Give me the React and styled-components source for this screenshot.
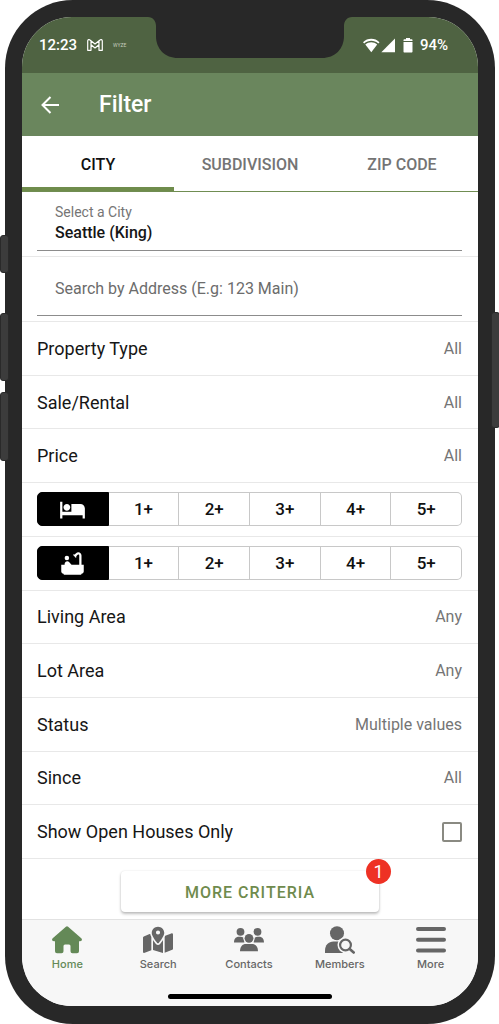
import React, { useState } from 'react';
import styled, { createGlobalStyle } from 'styled-components';
import { MdBathtub, MdHotel } from 'react-icons/md';
import { FaMapLocationDot } from 'react-icons/fa6';

const tabs = ['CITY', 'SUBDIVISION', 'ZIP CODE'];
const counts = ['1+', '2+', '3+', '4+', '5+'];

const topCriteria = [
  { label: 'Property Type', value: 'All' },
  { label: 'Sale/Rental', value: 'All' },
  { label: 'Price', value: 'All' },
];

const bottomCriteria = [
  { label: 'Living Area', value: 'Any' },
  { label: 'Lot Area', value: 'Any' },
  { label: 'Status', value: 'Multiple values' },
  { label: 'Since', value: 'All' },
];

const HomeIcon = () => (
  <svg width="30" height="28" viewBox="0 0 30 28" fill="currentColor">
    <path d="M13.9.8a1.700 1.700 0 0 1 2.200 0l13.200 11.400c1.300 1.200.5 3-1.200 3H27v10a2 2 0 0 1-2 2h-4.500a2 2 0 0 1-2-2V20a1.500 1.500 0 0 0-1.500-1.500h-4a1.500 1.500 0 0 0-1.500 1.500v5.200a2 2 0 0 1-2 2H5a2 2 0 0 1-2-2v-10H1.900c-1.700 0-2.500-1.800-1.200-3z" />
  </svg>
);

const ContactsIcon = () => (
  <svg width="30" height="28" viewBox="0 0 30 28" fill="currentColor">
    <circle cx="6.500" cy="5.800" r="3.900" />
    <circle cx="23.500" cy="5.800" r="3.900" />
    <path d="M0 16.500c0-3.600 1.800-5.700 5-5.700 2.200 0 4 .4 5.300 1.500v4.200zM30 16.500c0-3.600-1.800-5.700-5-5.700-2.200 0-4 .4-5.300 1.500v4.200z" />
    <circle cx="15" cy="12.300" r="5.700" fill="#f7f7f7" />
    <circle cx="15" cy="12.300" r="4.400" />
    <path d="M6 25.300c0-4.600 2.300-7.300 6-7.300h6c3.700 0 6 2.700 6 7.300z" />
  </svg>
);

const MembersIcon = () => (
  <svg width="30" height="28" viewBox="0 0 30 28">
    <circle cx="12" cy="7.200" r="7" fill="currentColor" />
    <path d="M0 27v-2.500c0-5.200 3.500-9 8.500-9H18v11.500z" fill="currentColor" />
    <circle cx="20.500" cy="19" r="8" fill="#f7f7f7" />
    <circle cx="20.500" cy="19" r="5.400" fill="none" stroke="currentColor" strokeWidth="2.200" />
    <path d="M24.700 23l4 3.500" stroke="currentColor" strokeWidth="2.600" strokeLinecap="round" />
  </svg>
);

const MoreIcon = () => (
  <svg width="30" height="28" viewBox="0 0 30 28" stroke="currentColor" strokeWidth="4" strokeLinecap="round">
    <path d="M2 3h26M2 13.700h26M2 24.400h26" />
  </svg>
);

const navItems = [
  { label: 'Home', icon: <HomeIcon />, active: true },
  { label: 'Search', icon: <FaMapLocationDot size={30} /> },
  { label: 'Contacts', icon: <ContactsIcon /> },
  { label: 'Members', icon: <MembersIcon /> },
  { label: 'More', icon: <MoreIcon /> },
];

const CountPicker = ({ name, icon }) => {
  const [selected, setSelected] = useState('any');

  return (
    <PickerRow>
      <Segments role="group" aria-label={name}>
        <Segment
          $active={selected === 'any'}
          aria-label={`Any ${name}`}
          aria-pressed={selected === 'any'}
          onClick={() => setSelected('any')}
        >
          {icon}
        </Segment>
        {counts.map(count => (
          <Segment
            key={count}
            $active={selected === count}
            aria-pressed={selected === count}
            onClick={() => setSelected(count)}
          >
            {count}
          </Segment>
        ))}
      </Segments>
    </PickerRow>
  );
};

const Criterion = ({ label, value }) => (
  <CriterionRow>
    <span>{label}</span>
    <Value>{value}</Value>
  </CriterionRow>
);

export default function App() {
  const [tab, setTab] = useState('CITY');
  const [openHouses, setOpenHouses] = useState(false);

  return (
    <Page>
      <GlobalStyle />
      <Phone>
        <SideKey $side="left" $top={235} $height={38} />
        <SideKey $side="left" $top={313} $height={68} />
        <SideKey $side="left" $top={392} $height={69} />
        <SideKey $side="right" $top={312} $height={116} />
        <Screen>
          <StatusBar>
            <Notch width="204" height="41" viewBox="0 0 204 41">
              <path d="M0 0c5 0 8 4 8 9v10c0 13 9 22 22 22h144c13 0 22-9 22-22V9c0-5 3-9 8-9z" fill="#282828" />
            </Notch>
            <StatusGroup>
              <span>12:23</span>
              <svg width="16" height="12" viewBox="0 0 16 12" fill="none" stroke="#fff" strokeWidth="1.200" strokeLinejoin="round">
                <path d="M.700 11.300V2C.700.500 2.200.300 3 1l5 4 5-4c.800-.700 2.300-.500 2.300 1v9.300h-3.300V5.800L8 9 4 5.800v5.500zM4 5.800V2M12 5.800V2" />
              </svg>
              <Tiny>WYZE</Tiny>
            </StatusGroup>
            <StatusIcons>
              <svg width="33" height="15" viewBox="0 0 33 15" fill="#fff">
                <path d="M0 4.200C4.500-.4 12-.4 16.500 4.200L15.300 5.600C11.300 1.800 5.200 1.800 1.200 5.600z" />
                <path d="M2.300 6.600c3.500-3 8.400-3 11.900 0l-5.900 7.600z" />
                <path d="M32 .500v13.700H18.300z" />
              </svg>
              <svg width="10" height="15" viewBox="0 0 10 15" fill="#fff">
                <path d="M3 0h4v1.300h1.500c.6 0 1 .4 1 1V3H.500v-.700c0-.600.400-1 1-1H3zM.500 4h9v9.500c0 .600-.400 1-1 1h-7c-.600 0-1-.400-1-1z" />
              </svg>
              <span>94%</span>
            </StatusIcons>
          </StatusBar>

          <Header>
            <BackButton aria-label="Back">
              <svg width="18" height="18" viewBox="0 0 18 18" fill="none" stroke="#fff" strokeWidth="2">
                <path d="M18 9H2M9.500 1L1.500 9l8 8" />
              </svg>
            </BackButton>
            <Title>Filter</Title>
          </Header>

          <Tabs role="tablist">
            {tabs.map(name => (
              <Tab key={name} role="tab" aria-selected={tab === name} $active={tab === name} onClick={() => setTab(name)}>
                {name}
              </Tab>
            ))}
          </Tabs>

          <Filters>
            <FieldRow>
              <Field>
                <FieldLabel htmlFor="city">Select a City</FieldLabel>
                <CitySelect id="city">
                  <option>Seattle (King)</option>
                </CitySelect>
              </Field>
            </FieldRow>
            <FieldRow>
              <Field>
                <AddressInput aria-label="Search by Address" placeholder="Search by Address (E.g: 123 Main)" />
              </Field>
            </FieldRow>
            {topCriteria.map(item => <Criterion key={item.label} {...item} />)}
            <CountPicker name="beds" icon={<MdHotel size={27} />} />
            <CountPicker name="baths" icon={<MdBathtub size={27} />} />
            {bottomCriteria.map(item => <Criterion key={item.label} {...item} />)}
            <CheckRow>
              <span>Show Open Houses Only</span>
              <Checkbox type="checkbox" checked={openHouses} onChange={e => setOpenHouses(e.target.checked)} />
            </CheckRow>
          </Filters>

          <Actions>
            <MoreButton>
              MORE CRITERIA
              <Badge>1</Badge>
            </MoreButton>
          </Actions>

          <BottomBar>
            <Nav>
              {navItems.map(item => (
                <NavLink key={item.label} href="#" $active={item.active}>
                  {item.icon}
                  <span>{item.label}</span>
                </NavLink>
              ))}
            </Nav>
            <HomeIndicator />
          </BottomBar>
        </Screen>
      </Phone>
    </Page>
  );
}

const GlobalStyle = createGlobalStyle`
  * {
    box-sizing: border-box;
  }
  body {
    margin: 0;
    background: #fff;
    font-family: Roboto, "Liberation Sans", sans-serif;
    color: #161616;
  }
  button, input, select {
    margin: 0;
    padding: 0;
    border: 0;
    background: none;
    font: inherit;
    color: inherit;
  }
  button {
    cursor: pointer;
  }
  svg {
    display: block;
    flex-shrink: 0;
  }
`;

const Page = styled.main`
  display: flex;
  min-height: 100vh;
  padding: 0 4px 0 5px;
`;

const Phone = styled.div`
  position: relative;
  flex: 1;
  display: flex;
  padding: 17px 17px 18px;
  border-radius: 68px;
  background: #282828;
`;

const SideKey = styled.i`
  position: absolute;
  ${props => props.$side}: -5px;
  top: ${props => props.$top}px;
  width: 9px;
  height: ${props => props.$height}px;
  border: 1px solid #2a2a2a;
  border-radius: 3px;
  background: #3c3c3c;
`;

const Screen = styled.div`
  flex: 1;
  min-width: 0;
  display: flex;
  flex-direction: column;
  overflow: hidden;
  border-radius: 50px;
  background: #fff;
`;

const StatusBar = styled.div`
  position: relative;
  display: flex;
  justify-content: space-between;
  height: 56px;
  padding: 0 30px 0 17px;
  background: #4f6342;
  color: #fff;
  font-size: 15px;
  font-weight: 500;
`;

const Notch = styled.svg`
  position: absolute;
  top: 0;
  left: 50%;
  transform: translateX(-50%);
`;

const StatusGroup = styled.div`
  display: flex;
  align-items: center;
  gap: 10px;
`;

const StatusIcons = styled(StatusGroup)`
  gap: 7px;
`;

const Tiny = styled.span`
  font-size: 5px;
  font-weight: 400;
  color: #c4ccbe;
`;

const Header = styled.header`
  display: flex;
  align-items: center;
  gap: 40px;
  height: 63px;
  padding: 0 19px;
  background: #6a865d;
  color: #fff;
`;

const BackButton = styled.button`
  display: flex;
`;

const Title = styled.h1`
  margin: 0;
  font-size: 23px;
  font-weight: 500;
`;

const Tabs = styled.div`
  display: grid;
  grid-template-columns: repeat(3, 1fr);
  height: 56px;
  border-bottom: 1px solid #708d52;
`;

const Tab = styled.button`
  padding-top: 6px;
  border-bottom: 4px solid ${props => (props.$active ? '#6f8c4c' : 'transparent')};
  font-size: 16px;
  font-weight: 500;
  color: ${props => (props.$active ? '#111' : '#747474')};
`;

const Filters = styled.div`
  flex: 1;
  display: flex;
  flex-direction: column;
`;

const FieldRow = styled.div`
  padding: 0 16px 5px 15px;
  border-bottom: 1px solid #e8e8e8;
`;

const Field = styled.div`
  display: flex;
  flex-direction: column;
  justify-content: center;
  height: 59px;
  padding: 4px 18px 0;
  border-bottom: 1px solid #8c8c8c;
`;

const FieldLabel = styled.label`
  font-size: 14px;
  line-height: 18px;
  color: #757575;
`;

const CitySelect = styled.select`
  appearance: none;
  height: 22px;
  font-size: 16px;
  font-weight: 500;
`;

const AddressInput = styled.input`
  width: 100%;
  font-size: 16px;
  outline: none;

  &::placeholder {
    color: #6c6c6c;
    opacity: 1;
  }
`;

const PickerRow = styled.div`
  flex: 1 0 48px;
  display: flex;
  align-items: center;
  padding: 0 16px 0 15px;
  border-bottom: 1px solid #e8e8e8;
  font-size: 18px;
`;

const CriterionRow = styled(PickerRow).attrs({ as: 'button' })`
  justify-content: space-between;
  text-align: left;
`;

const CheckRow = styled(PickerRow).attrs({ as: 'label' })`
  justify-content: space-between;
`;

const Value = styled.span`
  font-size: 16px;
  color: #757575;
`;

const Segments = styled.div`
  flex: 1;
  display: flex;
  height: 34px;
`;

const Segment = styled.button`
  flex: 1;
  display: flex;
  align-items: center;
  justify-content: center;
  border: 1px solid ${props => (props.$active ? '#000' : '#c8c8c8')};
  font-size: 17px;
  font-weight: 500;
  background: ${props => (props.$active ? '#000' : '#fff')};
  color: ${props => (props.$active ? '#fff' : '#111')};

  & + & {
    border-left-width: 0;
  }
  &:first-child {
    border-radius: 5px 0 0 5px;
  }
  &:last-child {
    border-radius: 0 5px 5px 0;
  }
`;

const Checkbox = styled.input`
  appearance: none;
  width: 20px;
  height: 20px;
  border: 2px solid #8a8a82;
  border-radius: 2px;

  &:checked {
    background: #6f8c4c;
  }
`;

const Actions = styled.div`
  display: flex;
  justify-content: center;
  padding: 12px 16px 7px;
`;

const MoreButton = styled.button`
  position: relative;
  width: 258px;
  height: 41px;
  padding-top: 2px;
  border-radius: 4px;
  background: #fff;
  box-shadow: 0 2px 3px rgba(0, 0, 0, 0.25), 0 0 2px rgba(0, 0, 0, 0.1);
  color: #6f8b4d;
  font-size: 16px;
  font-weight: 500;
  letter-spacing: 1px;
`;

const Badge = styled.span`
  position: absolute;
  top: -12px;
  right: -12px;
  width: 25px;
  border-radius: 50%;
  background: #ee3124;
  color: #fff;
  font-size: 18px;
  font-weight: 400;
  line-height: 25px;
  letter-spacing: 0;
`;

const BottomBar = styled.footer`
  display: flex;
  flex-direction: column;
  align-items: center;
  justify-content: space-between;
  height: 87px;
  padding-bottom: 7px;
  border-top: 1px solid #e2e2e2;
  background: #f7f7f7;
`;

const Nav = styled.nav`
  align-self: stretch;
  display: grid;
  grid-template-columns: repeat(5, 1fr);
  padding: 6px 2px 0 0;
`;

const NavLink = styled.a`
  display: flex;
  flex-direction: column;
  align-items: center;
  gap: 3px;
  color: ${props => (props.$active ? '#648957' : '#666')};
  font-family: Inter, "Liberation Sans", sans-serif;
  font-size: 11px;
  font-weight: 500;
  line-height: 14px;
  text-decoration: none;

  svg {
    height: 28px;
  }
`;

const HomeIndicator = styled.div`
  width: 36%;
  height: 5px;
  border-radius: 3px;
  background: #000;
`;
